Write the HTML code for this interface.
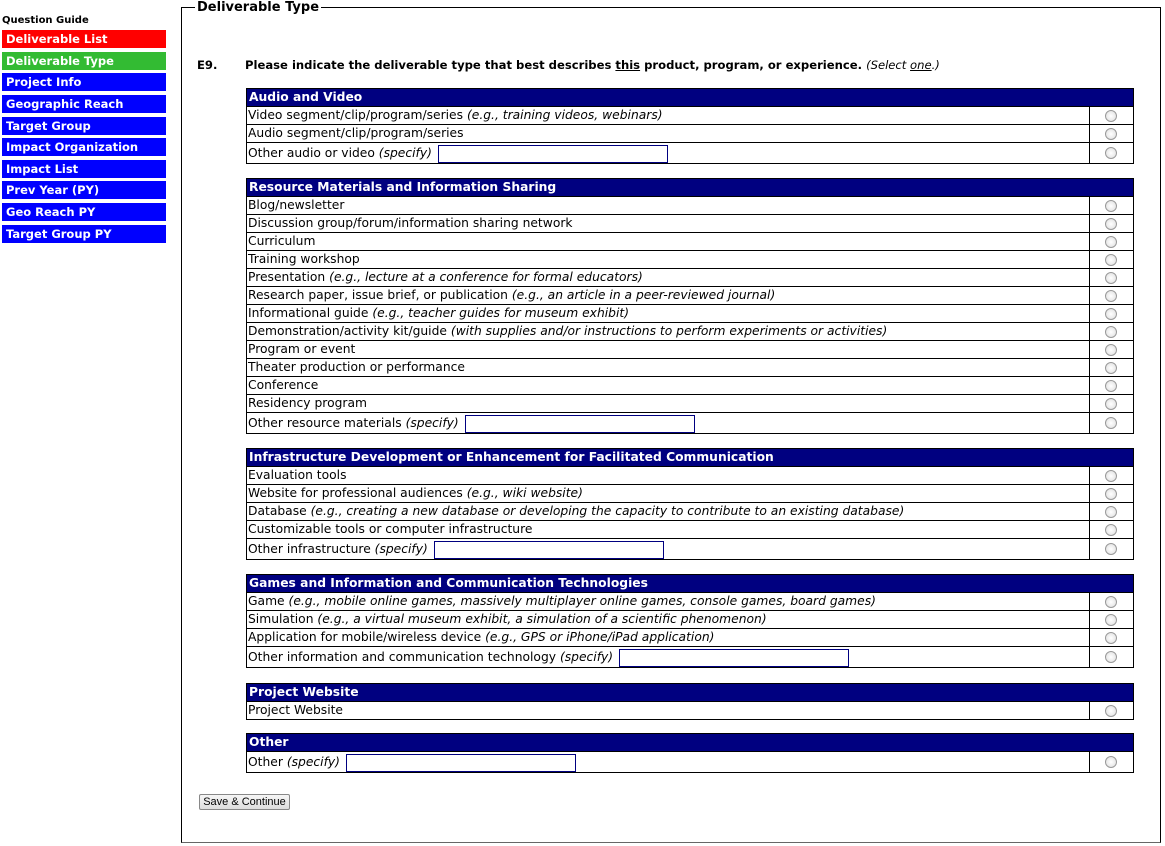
<!DOCTYPE html>
<html><head><style>
body{margin:0;background:#fff;font-family:"DejaVu Sans",Verdana,sans-serif;font-size:12.3px;color:#000;width:1165px;height:846px;overflow:hidden;position:relative}
.qg{position:absolute;left:2px;top:15px;font-size:10px;font-weight:bold}
.nb{position:absolute;left:2px;width:160px;height:18px;line-height:18px;padding-left:4px;color:#fff;font-weight:bold;font-size:11.5px;background:#0000ff;white-space:nowrap}
.fs{position:absolute;left:181px;top:7px;width:978px;height:834px;border:1px solid #000;border-bottom-color:#666}
.lg{position:absolute;left:195px;top:0;background:#fff;padding:0 2px;font-weight:bold;font-size:13px}
.q{position:absolute;top:58px;font-weight:bold;font-size:11.6px;white-space:nowrap}
.t{position:absolute;left:246px;width:886px;border:1px solid #000}
.h{background:#000080;color:#fff;font-weight:bold;height:17px;line-height:17px;padding-left:2px;font-size:12.3px}
.r{height:17px;line-height:17px;border-top:1px solid #000;position:relative;padding-left:1px;white-space:nowrap}
.r.o{height:20px;line-height:20px}
.c{position:absolute;right:0;top:0;bottom:0;width:43px;border-left:1px solid #000}
.c:after{content:"";position:absolute;left:15px;top:50%;margin-top:-6px;width:10px;height:10px;border-radius:50%;border:1px solid #999;background:radial-gradient(#fff,#ddd)}
i{font-style:italic}
.in{display:inline-block;width:228px;height:16px;border:1px solid #000080;vertical-align:middle;margin-left:2px}
.btn{position:absolute;left:199px;top:794px;width:89px;height:14px;border:1px solid #888;border-radius:2px;background:linear-gradient(#f6f6f6,#ddd);font-family:"Liberation Sans",sans-serif;font-size:11px;line-height:14px;text-align:center}
</style></head><body>
<div class="qg">Question Guide</div>
<div class="nb" style="top:30px;background:#ff0000">Deliverable List</div>
<div class="nb" style="top:52px;background:#33bb33">Deliverable Type</div>
<div class="nb" style="top:73px">Project Info</div>
<div class="nb" style="top:95px">Geographic Reach</div>
<div class="nb" style="top:117px">Target Group</div>
<div class="nb" style="top:138px">Impact Organization</div>
<div class="nb" style="top:160px">Impact List</div>
<div class="nb" style="top:181px">Prev Year (PY)</div>
<div class="nb" style="top:203px">Geo Reach PY</div>
<div class="nb" style="top:225px">Target Group PY</div>

<div class="fs"></div>
<div class="lg">Deliverable Type</div>
<div class="q" style="left:197px">E9.</div>
<div class="q" style="left:245px">Please indicate the deliverable type that best describes <u>this</u> product, program, or experience. <span style="font-weight:normal"><i>(Select <u>one</u>.)</i></span></div>

<div class="t" style="top:88px">
<div class="h">Audio and Video</div>
<div class="r">Video segment/clip/program/series <i>(e.g., training videos, webinars)</i><span class="c"></span></div>
<div class="r">Audio segment/clip/program/series<span class="c"></span></div>
<div class="r o">Other audio or video <i>(specify)</i> <span class="in"></span><span class="c"></span></div>
</div>

<div class="t" style="top:178px">
<div class="h">Resource Materials and Information Sharing</div>
<div class="r">Blog/newsletter<span class="c"></span></div>
<div class="r">Discussion group/forum/information sharing network<span class="c"></span></div>
<div class="r">Curriculum<span class="c"></span></div>
<div class="r">Training workshop<span class="c"></span></div>
<div class="r">Presentation <i>(e.g., lecture at a conference for formal educators)</i><span class="c"></span></div>
<div class="r">Research paper, issue brief, or publication <i>(e.g., an article in a peer-reviewed journal)</i><span class="c"></span></div>
<div class="r">Informational guide <i>(e.g., teacher guides for museum exhibit)</i><span class="c"></span></div>
<div class="r">Demonstration/activity kit/guide <i>(with supplies and/or instructions to perform experiments or activities)</i><span class="c"></span></div>
<div class="r">Program or event<span class="c"></span></div>
<div class="r">Theater production or performance<span class="c"></span></div>
<div class="r">Conference<span class="c"></span></div>
<div class="r">Residency program<span class="c"></span></div>
<div class="r o">Other resource materials <i>(specify)</i> <span class="in"></span><span class="c"></span></div>
</div>

<div class="t" style="top:448px">
<div class="h">Infrastructure Development or Enhancement for Facilitated Communication</div>
<div class="r">Evaluation tools<span class="c"></span></div>
<div class="r">Website for professional audiences <i>(e.g., wiki website)</i><span class="c"></span></div>
<div class="r">Database <i>(e.g., creating a new database or developing the capacity to contribute to an existing database)</i><span class="c"></span></div>
<div class="r">Customizable tools or computer infrastructure<span class="c"></span></div>
<div class="r o">Other infrastructure <i>(specify)</i> <span class="in"></span><span class="c"></span></div>
</div>

<div class="t" style="top:574px">
<div class="h">Games and Information and Communication Technologies</div>
<div class="r">Game <i>(e.g., mobile online games, massively multiplayer online games, console games, board games)</i><span class="c"></span></div>
<div class="r">Simulation <i>(e.g., a virtual museum exhibit, a simulation of a scientific phenomenon)</i><span class="c"></span></div>
<div class="r">Application for mobile/wireless device <i>(e.g., GPS or iPhone/iPad application)</i><span class="c"></span></div>
<div class="r o">Other information and communication technology <i>(specify)</i> <span class="in"></span><span class="c"></span></div>
</div>

<div class="t" style="top:683px">
<div class="h">Project Website</div>
<div class="r">Project Website<span class="c"></span></div>
</div>

<div class="t" style="top:733px">
<div class="h">Other</div>
<div class="r o">Other <i>(specify)</i> <span class="in"></span><span class="c"></span></div>
</div>

<div class="btn">Save &amp; Continue</div>
</body></html>
